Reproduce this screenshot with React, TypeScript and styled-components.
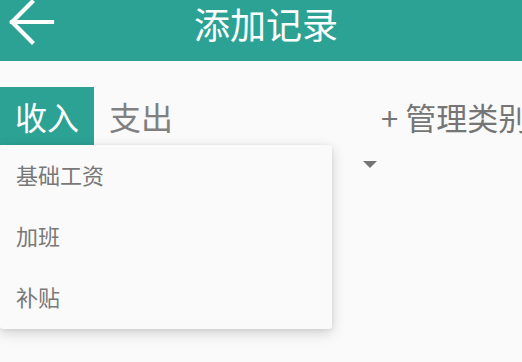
import React from 'react';
import styled, { createGlobalStyle } from 'styled-components';

const GlobalStyle = createGlobalStyle`
  html, body {
    margin: 0;
    padding: 0;
    background: #fafafa;
    font-family: "Noto Sans CJK SC", "Noto Sans", sans-serif;
  }
`;

const categories = ['基础工资', '加班', '补贴'];

export default function App() {
  return (
    <>
      <GlobalStyle />
      <Screen>
        <Header>
          <BackButton>
            <svg width="60" height="46" viewBox="0 0 60 46" fill="none">
              <path d="M12 22H52M32 2L12 22L32 42" stroke="#fff" strokeWidth="4.2" strokeLinecap="square" />
            </svg>
          </BackButton>
          <Title>添加记录</Title>
          <HeaderSpacer />
        </Header>
        <Body>
          <TabRow>
            <Tab active>收入</Tab>
            <Tab>支出</Tab>
            <ManageButton>+ 管理类别</ManageButton>
          </TabRow>
          <Spinner>
            <Caret />
          </Spinner>
          <Dropdown>
            {categories.map((c) => (
              <DropdownItem key={c}>{c}</DropdownItem>
            ))}
          </Dropdown>
        </Body>
      </Screen>
    </>
  );
}

const Screen = styled.div`
  width: 522px;
  height: 362px;
  overflow: hidden;
  background: #fafafa;
`;

const Header = styled.div`
  height: 61px;
  background: #2ca294;
  display: flex;
  align-items: flex-start;
`;

const BackButton = styled.div`
  width: 60px;
  height: 46px;
  flex-shrink: 0;
  display: flex;
`;

const Title = styled.div`
  flex: 1;
  text-align: center;
  color: #fff;
  font-size: 36px;
  line-height: 46px;
  white-space: nowrap;
`;

const HeaderSpacer = styled.div`
  width: 50px;
  flex-shrink: 0;
`;

const Body = styled.div`
  position: relative;
  padding-top: 26px;
`;

const TabRow = styled.div`
  display: flex;
  align-items: stretch;
  height: 58px;
  white-space: nowrap;
`;

const Tab = styled.div<{ active?: boolean }>`
  width: 94px;
  box-sizing: border-box;
  padding: 0 15px;
  display: flex;
  align-items: center;
  font-size: 32px;
  color: ${(p) => (p.active ? '#fff' : '#808080')};
  background: ${(p) => (p.active ? '#2ca294' : 'transparent')};
`;

const ManageButton = styled.div`
  margin-left: 193px;
  display: flex;
  align-items: center;
  font-size: 31px;
  color: #757575;
`;

const Spinner = styled.div`
  width: 385px;
  height: 44px;
  display: flex;
  justify-content: flex-end;
  align-items: flex-start;
  padding-top: 16px;
  box-sizing: border-box;
  padding-right: 8px;
`;

const Caret = styled.div`
  width: 0;
  height: 0;
  border-left: 7px solid transparent;
  border-right: 7px solid transparent;
  border-top: 7px solid #757575;
`;

const Dropdown = styled.div`
  position: absolute;
  top: 84px;
  left: 0;
  width: 332px;
  padding: 0 0 1px;
  background: #fafafa;
  border-radius: 3px;
  box-shadow: 0 4px 14px rgba(0, 0, 0, 0.16), 0 1px 4px rgba(0, 0, 0, 0.08);
`;

const DropdownItem = styled.div`
  height: 61px;
  box-sizing: border-box;
  padding: 0 0 4px 16px;
  display: flex;
  align-items: center;
  font-size: 22px;
  color: #787878;
`;
